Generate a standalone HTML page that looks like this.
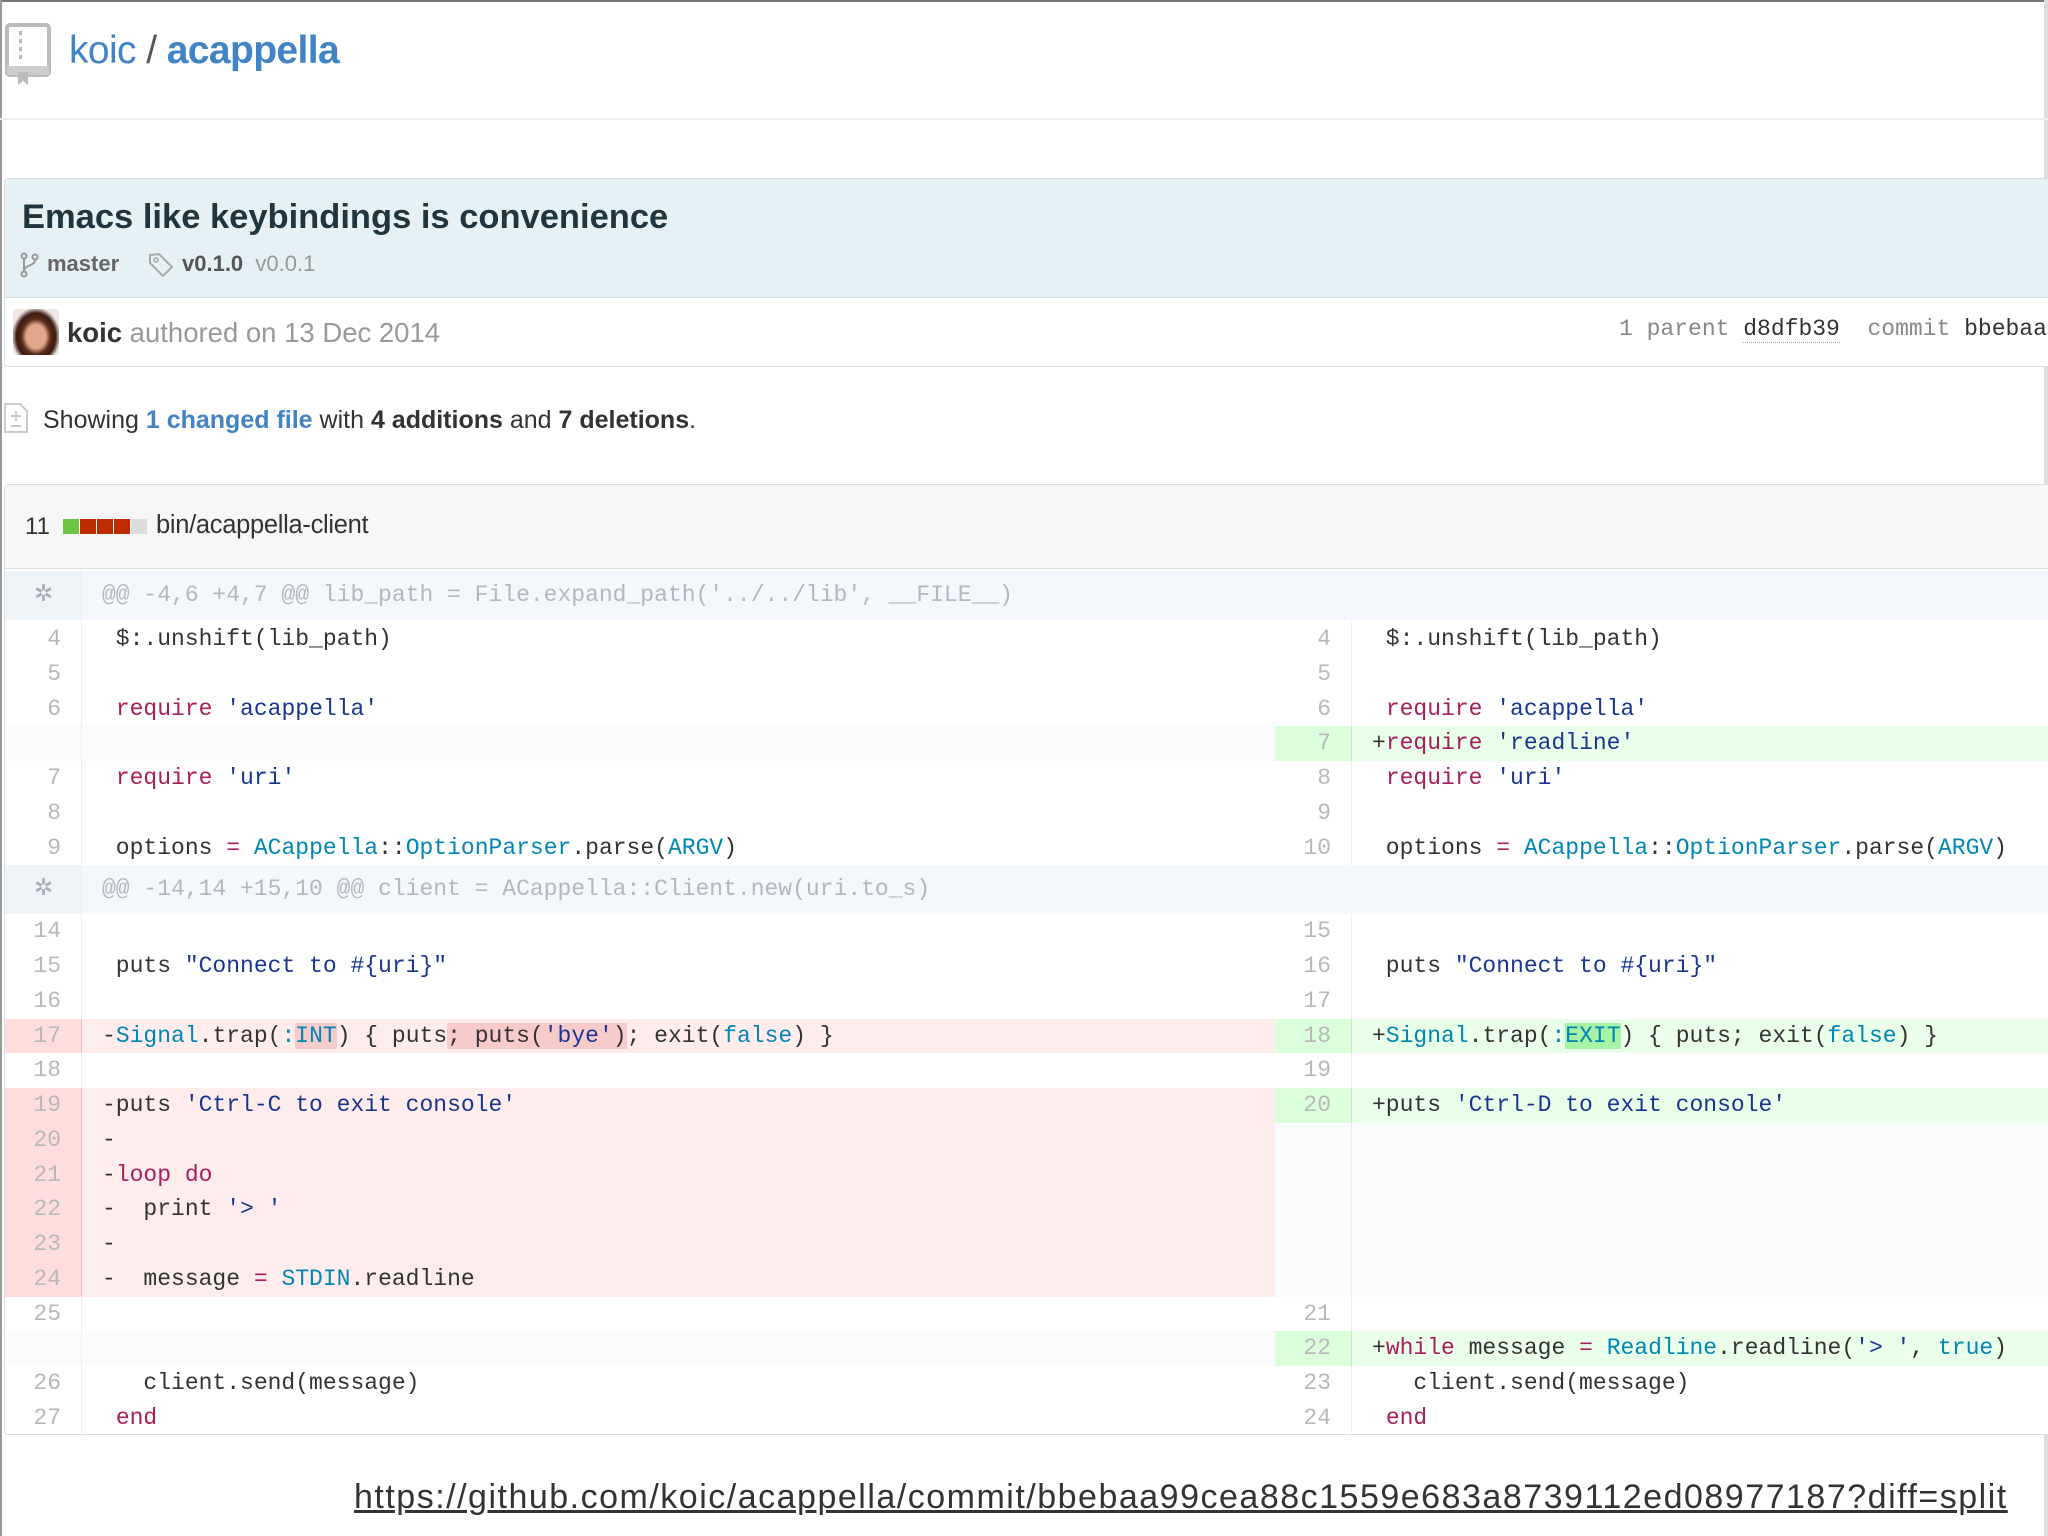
<!DOCTYPE html>
<html><head><meta charset="utf-8"><style>
*{margin:0;padding:0;box-sizing:border-box}
body{width:2048px;height:1536px;background:#fff;position:relative;overflow:hidden;font-family:"Liberation Sans",sans-serif;color:#333}
.abs{position:absolute}
.mono{font-family:"Liberation Mono",monospace}
.row{display:flex;height:34.75px;line-height:34.75px;font-family:"Liberation Mono",monospace;font-size:23px;color:#333;white-space:pre}
.n{width:77px;text-align:right;padding-right:20px;color:#b8b8b8;border-right:1px solid #eee}
.cl{width:1193px;padding-left:20px}
.cr{width:696px;padding-left:20px}
.d.n{background:#ffdddd;border-color:#f1c0c0}.d.c{background:#ffecec}
.a.n{background:#dbffdb;border-color:#c1e9c1}.a.c{background:#eaffea}
.e{background:#fafbfc}
.k{color:#a71d5d}.s{color:#183691}.x{color:#0086b3}
.dx{background:#f8cbcb}.ax{background:#a6f3a6}
.hunk{display:flex;height:49px;line-height:49px;background:#f4f7fb;font-family:"Liberation Mono",monospace;font-size:23px;color:#b0b8c0}
</style></head><body>
<div class="abs" style="left:0;top:0;width:2048px;height:2px;background:#777"></div>
<div class="abs" style="left:0;top:0;width:2px;height:1536px;background:#999"></div>
<div class="abs" style="left:2044px;top:0;width:4px;height:1536px;background:#ddd"></div>
<svg class="abs" style="left:4px;top:22px" width="48" height="64" viewBox="0 0 48 64"><rect x="3" y="3" width="42" height="50" rx="3" fill="none" stroke="#bbb" stroke-width="4"/><rect x="3" y="44" width="42" height="9" fill="#ccc"/><g fill="#bbb"><rect x="15" y="9" width="3" height="4"/><rect x="15" y="17" width="3" height="4"/><rect x="15" y="25" width="3" height="4"/><rect x="15" y="33" width="3" height="4"/></g><path d="M14 50h10v13l-5-4-5 4z" fill="#bbb"/></svg>
<div class="abs" style="left:69px;top:29px;font-size:39px;color:#4183c4;letter-spacing:-0.6px">koic <span style="color:#555">/</span> <b>acappella</b></div>
<div class="abs" style="left:0;top:118px;width:2048px;height:2px;background:#eee"></div>
<div class="abs" style="left:4px;top:178px;width:2050px;height:189px;border:1px solid #d4dde4;border-radius:4px;background:#fff"></div>
<div class="abs" style="left:5px;top:179px;width:2050px;height:119px;background:#e6f1f6;border-bottom:1px solid #d4dde4"></div>
<div class="abs" style="left:22px;top:198px;font-size:34.5px;font-weight:bold;color:#1f3540">Emacs like keybindings is convenience</div>
<svg class="abs" style="left:20px;top:252px" width="20" height="26" viewBox="0 0 20 26"><g fill="none" stroke="#999" stroke-width="2"><circle cx="4" cy="4" r="2.5"/><circle cx="4" cy="22" r="2.5"/><circle cx="15" cy="5" r="2.5"/><path d="M4 7v12M15 8c0 6-11 5-11 11"/></g></svg>
<div class="abs" style="left:47px;top:251px;font-size:22px;font-weight:bold;color:#666">master</div>
<svg class="abs" style="left:148px;top:252px" width="26" height="26" viewBox="0 0 26 26"><path d="M2 3l9-1 13 13-9 9L2 11z" fill="none" stroke="#aaa" stroke-width="2"/><circle cx="8" cy="8" r="2" fill="none" stroke="#aaa" stroke-width="1.5"/></svg>
<div class="abs" style="left:182px;top:251px;font-size:22px;color:#999"><b style="color:#555">v0.1.0</b>&nbsp; v0.0.1</div>
<div class="abs" style="left:13px;top:309px;width:46px;height:46px;border-radius:4px;background:radial-gradient(ellipse at 50% 60%,#e0a88a 0 30%,#5a2a1a 45%,#3a1a10 60%,#f0e8e4 75%)"></div>
<div class="abs" style="left:67px;top:317px;font-size:27.5px;color:#999"><b style="color:#333">koic</b> authored on 13 Dec 2014</div>
<div class="abs mono" style="left:1619px;top:316px;font-size:23px;color:#888;white-space:pre">1 parent <span style="color:#333;border-bottom:1px dotted #aaa">d8dfb39</span>  commit <span style="color:#333">bbebaa99</span></div>
<svg class="abs" style="left:3px;top:402px" width="26" height="32" viewBox="0 0 26 32"><path d="M2 2h15l7 7v21H2z" fill="none" stroke="#ccc" stroke-width="2"/><path d="M13 9v10M8 14h10M8 24h10" stroke="#ccc" stroke-width="2"/></svg>
<div class="abs" style="left:43px;top:406px;font-size:25px;color:#333">Showing <b style="color:#4183c4">1 changed file</b> with <b>4 additions</b> and <b>7 deletions</b>.</div>
<div class="abs" style="left:4px;top:484px;width:2050px;height:951px;border:1px solid #ddd;border-radius:4px;background:#fff"></div>
<div class="abs" style="left:5px;top:485px;width:2050px;height:84px;background:#f7f7f7;border-bottom:1px solid #ddd"></div>
<div class="abs" style="left:25px;top:513px;font-size:24px;color:#333">11</div>
<div class="abs" style="left:63px;top:519px;width:16px;height:15px;background:#6cc644"></div>
<div class="abs" style="left:80px;top:519px;width:16px;height:15px;background:#bd2c00"></div>
<div class="abs" style="left:97px;top:519px;width:16px;height:15px;background:#bd2c00"></div>
<div class="abs" style="left:114px;top:519px;width:16px;height:15px;background:#bd2c00"></div>
<div class="abs" style="left:131px;top:519px;width:16px;height:15px;background:#ddd"></div>
<div class="abs" style="left:156px;top:511px;font-size:25.5px;color:#333;letter-spacing:-0.3px">bin/acappella-client</div>

<div class="abs" style="left:5px;top:571px;width:2043px">
<div class="hunk"><div style="width:77px;text-align:center;color:#aab;background:#eef3f8">✲</div><div style="padding-left:20px;white-space:pre">@@ -4,6 +4,7 @@ lib_path = File.expand_path('../../lib', __FILE__)</div></div>
<div style="height:2px"></div>
<div class="row"><div class="n">4</div><div class="c cl"> $:.unshift(lib_path)</div><div class="n">4</div><div class="c cr"> $:.unshift(lib_path)</div></div>
<div class="row"><div class="n">5</div><div class="c cl"> </div><div class="n">5</div><div class="c cr"> </div></div>
<div class="row"><div class="n">6</div><div class="c cl"> <span class="k">require</span> <span class="s">'acappella'</span></div><div class="n">6</div><div class="c cr"> <span class="k">require</span> <span class="s">'acappella'</span></div></div>
<div class="row"><div class="n e"></div><div class="c cl e"></div><div class="a n">7</div><div class="a c cr">+<span class="k">require</span> <span class="s">'readline'</span></div></div>
<div class="row"><div class="n">7</div><div class="c cl"> <span class="k">require</span> <span class="s">'uri'</span></div><div class="n">8</div><div class="c cr"> <span class="k">require</span> <span class="s">'uri'</span></div></div>
<div class="row"><div class="n">8</div><div class="c cl"> </div><div class="n">9</div><div class="c cr"> </div></div>
<div class="row"><div class="n">9</div><div class="c cl"> options <span class="k">=</span> <span class="x">ACappella</span>::<span class="x">OptionParser</span>.parse(<span class="x">ARGV</span>)</div><div class="n">10</div><div class="c cr"> options <span class="k">=</span> <span class="x">ACappella</span>::<span class="x">OptionParser</span>.parse(<span class="x">ARGV</span>)</div></div>
<div class="hunk"><div style="width:77px;text-align:center;color:#aab;background:#eef3f8">✲</div><div style="padding-left:20px;white-space:pre">@@ -14,14 +15,10 @@ client = ACappella::Client.new(uri.to_s)</div></div>
<div class="row"><div class="n">14</div><div class="c cl"> </div><div class="n">15</div><div class="c cr"> </div></div>
<div class="row"><div class="n">15</div><div class="c cl"> puts <span class="s">"Connect to #{uri}"</span></div><div class="n">16</div><div class="c cr"> puts <span class="s">"Connect to #{uri}"</span></div></div>
<div class="row"><div class="n">16</div><div class="c cl"> </div><div class="n">17</div><div class="c cr"> </div></div>
<div class="row"><div class="d n">17</div><div class="d c cl">-<span class="x">Signal</span>.trap(<span class="x">:<span class="dx">INT</span></span>) { puts<span class="dx">; puts(<span class="s">'bye'</span>)</span>; exit(<span class="x">false</span>) }</div><div class="a n">18</div><div class="a c cr">+<span class="x">Signal</span>.trap(<span class="x">:<span class="ax">EXIT</span></span>) { puts; exit(<span class="x">false</span>) }</div></div>
<div class="row"><div class="n">18</div><div class="c cl"> </div><div class="n">19</div><div class="c cr"> </div></div>
<div class="row"><div class="d n">19</div><div class="d c cl">-puts <span class="s">'Ctrl-C to exit console'</span></div><div class="a n">20</div><div class="a c cr">+puts <span class="s">'Ctrl-D to exit console'</span></div></div>
<div class="row"><div class="d n">20</div><div class="d c cl">-</div><div class="n e"></div><div class="c cr e"></div></div>
<div class="row"><div class="d n">21</div><div class="d c cl">-<span class="k">loop</span> <span class="k">do</span></div><div class="n e"></div><div class="c cr e"></div></div>
<div class="row"><div class="d n">22</div><div class="d c cl">-  print <span class="s">'&gt; '</span></div><div class="n e"></div><div class="c cr e"></div></div>
<div class="row"><div class="d n">23</div><div class="d c cl">-</div><div class="n e"></div><div class="c cr e"></div></div>
<div class="row"><div class="d n">24</div><div class="d c cl">-  message <span class="k">=</span> <span class="x">STDIN</span>.readline</div><div class="n e"></div><div class="c cr e"></div></div>
<div class="row"><div class="n">25</div><div class="c cl"> </div><div class="n">21</div><div class="c cr"> </div></div>
<div class="row"><div class="n e"></div><div class="c cl e"></div><div class="a n">22</div><div class="a c cr">+<span class="k">while</span> message <span class="k">=</span> <span class="x">Readline</span>.readline(<span class="s">'&gt; '</span>, <span class="x">true</span>)</div></div>
<div class="row"><div class="n">26</div><div class="c cl">   client.send(message)</div><div class="n">23</div><div class="c cr">   client.send(message)</div></div>
<div class="row"><div class="n">27</div><div class="c cl"> <span class="k">end</span></div><div class="n">24</div><div class="c cr"> <span class="k">end</span></div></div>
</div>

<div class="abs" style="left:354px;top:1478px;font-size:34px;color:#333;text-decoration:underline;white-space:nowrap;letter-spacing:1.5px">https://github.com/koic/acappella/commit/bbebaa99cea88c1559e683a8739112ed08977187?diff=split</div>
</body></html>
